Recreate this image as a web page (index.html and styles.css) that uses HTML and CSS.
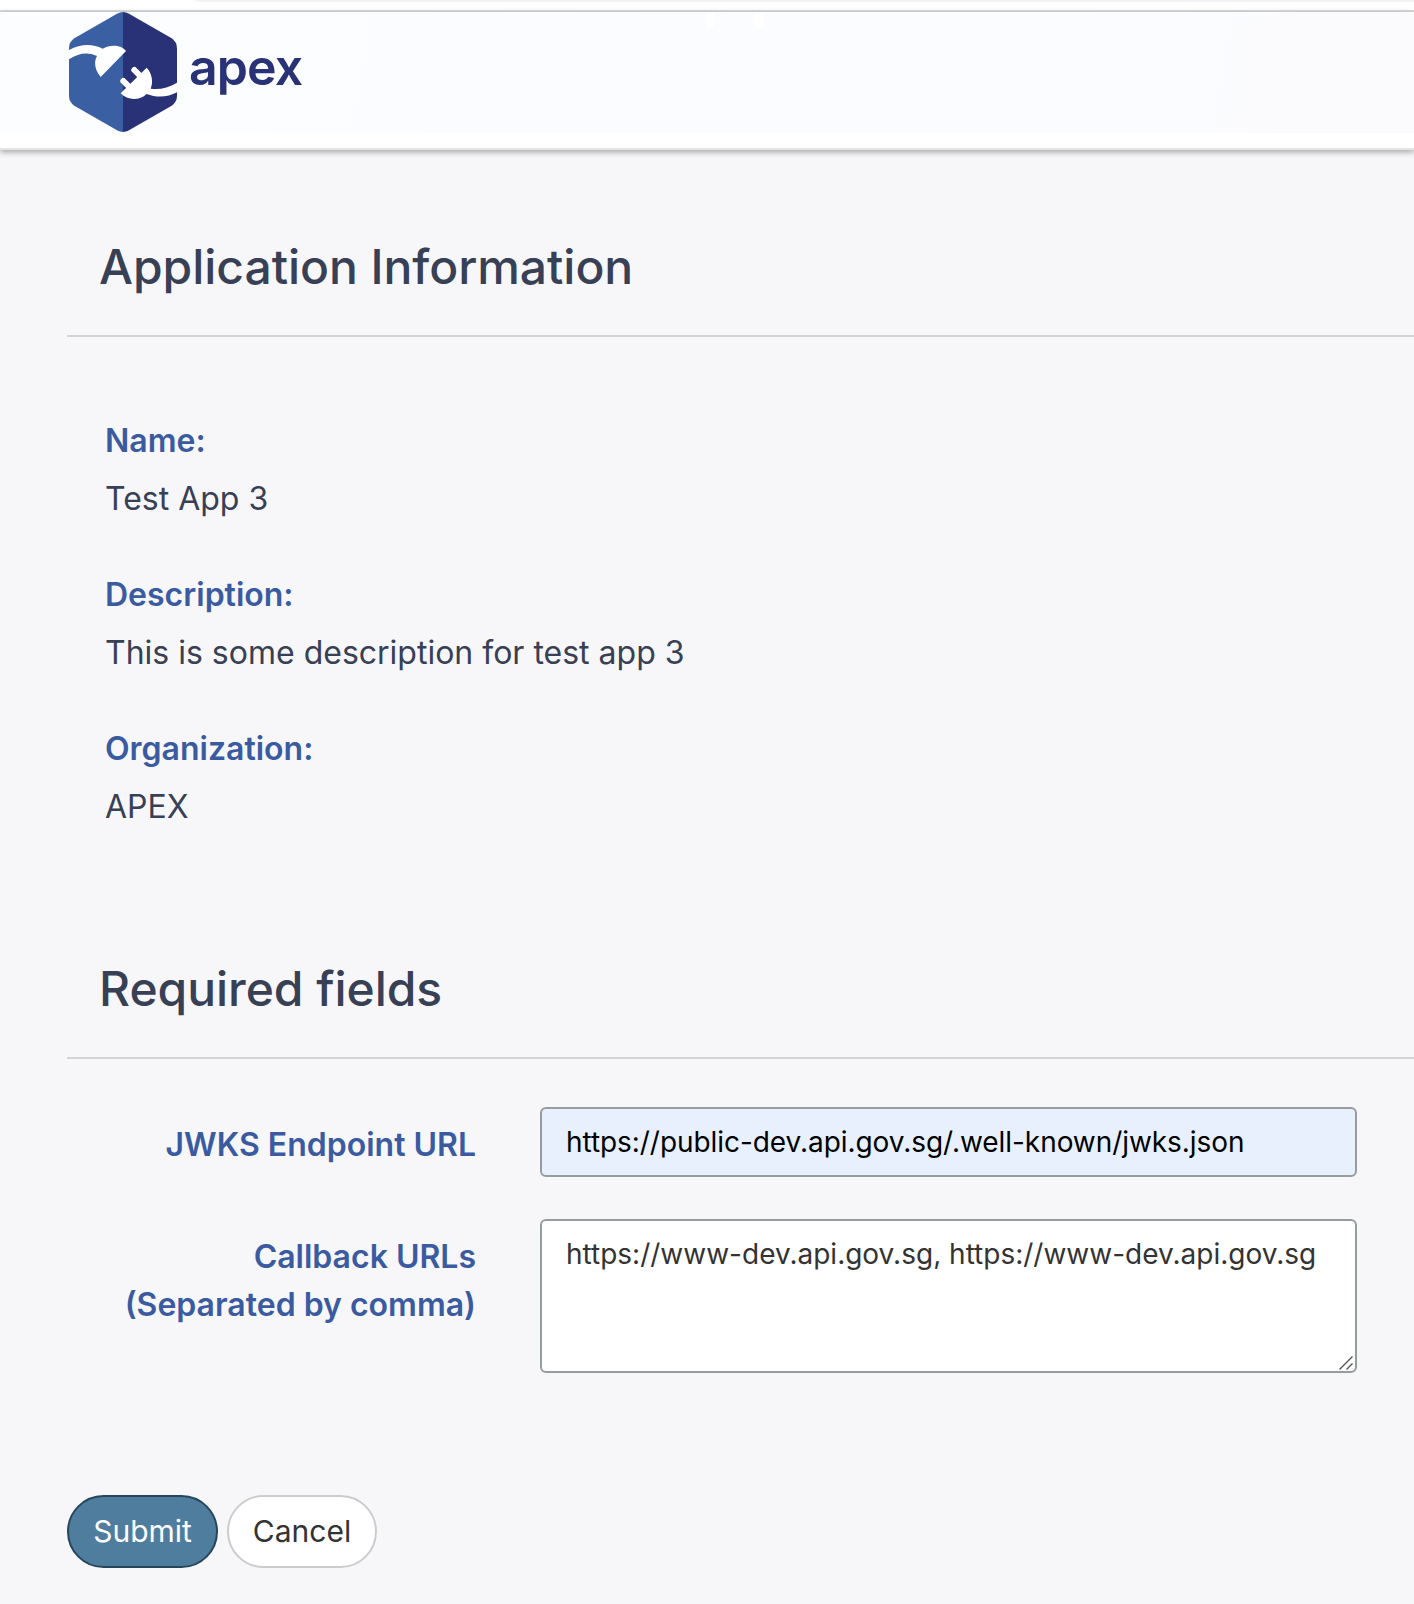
FILE: index.html
```html
<!DOCTYPE html>
<html lang="en">
<head>
<meta charset="utf-8">
<title>apex - Application Information</title>
<link rel="stylesheet" href="styles.css">
</head>
<body>
<div class="chrome-strip"><div class="chrome-field"></div></div>
<header class="site-header">
  <div class="header-band">
    <a class="brand">
      <svg class="brand-mark" viewBox="27 21 324 360" aria-hidden="true">
        <defs>
          <clipPath id="hex"><path d="M171 26Q189 16 207 26L335 100Q351 111 351 130V272Q351 291 335 302L207 376Q189 386 171 376L43 302Q27 291 27 272V130Q27 111 43 100Z"/></clipPath>
        </defs>
        <g clip-path="url(#hex)">
          <rect x="27" y="21" width="162" height="360" fill="#3b5fa3"/>
          <rect x="189" y="21" width="162" height="360" fill="#2a3277"/>
          <path fill="#fff" d="M25 136C60 117 96 115 128 131C150 118 184 119 198 138L122 216C104 195 101 170 111 153C82 140 56 144 25 164Z"/>
          <path fill="#fff" d="M260 188C277 205 280 232 272 251C300 255 326 248 353 232V261C325 277 291 279 260 267C240 286 204 289 182 265Z"/>
          <path fill="none" stroke="#fff" stroke-width="18" stroke-linecap="round" d="M223 195L245 217M190 228L212 250"/>
        </g>
      </svg>
      <span class="brand-name">apex</span>
    </a>
    <span class="notch notch-left"></span><span class="notch notch-right"></span>
  </div>
</header>
<main class="content">
  <section>
    <h1 class="section-title">Application Information</h1>
    <dl class="details">
      <dt>Name:</dt><dd>Test App 3</dd>
      <dt>Description:</dt><dd>This is some description for test app 3</dd>
      <dt>Organization:</dt><dd>APEX</dd>
    </dl>
  </section>
  <form class="form">
    <h2 class="section-title">Required fields</h2>
    <div class="field jwks">
      <label for="jwks">JWKS Endpoint URL</label>
      <input id="jwks" type="text" value="https://public-dev.api.gov.sg/.well-known/jwks.json">
    </div>
    <div class="field callback">
      <label for="callback">Callback URLs<br>(Separated by comma)</label>
      <div class="textarea-wrap">
        <textarea id="callback" spellcheck="false">https://www-dev.api.gov.sg, https://www-dev.api.gov.sg</textarea>
        <svg class="grip" viewBox="0 0 14 14" aria-hidden="true"><path d="M.5 13.5L13.5.5M7.5 13.5L13.5 7.5"/></svg>
      </div>
    </div>
    <div class="actions">
      <button type="button" class="btn btn-primary">Submit</button>
      <button type="button" class="btn">Cancel</button>
    </div>
  </form>
</main>
</body>
</html>
```
FILE: styles.css
```css
* { box-sizing: border-box; }
body {
  margin: 0;
  height: 1604px;
  overflow: hidden;
  background: #f7f7fa;
  color: #384055;
  font-family: Inter, "Liberation Sans", sans-serif;
}
.chrome-strip {
  height: 12px;
  padding-left: 194px;
  background: #fff;
  border-bottom: 2px solid #dadbdc;
}
.chrome-field {
  height: 2px;
  background: #f2f2f2;
  border-bottom-left-radius: 12px 2px;
}
.site-header {
  height: 138px;
  background: #fff;
  border-bottom: 2px solid #e5e5e5;
  box-shadow: 0 2px 6px rgba(0, 0, 0, .35);
}
.header-band {
  position: relative;
  height: 121px;
  padding-left: 69px;
  background: linear-gradient(100deg, #fbfdff, #fbfcff 85%, #fbfbfd 90%);
}
.brand { display: flex; }
.brand-mark { width: 108px; height: 120px; }
.brand-name {
  margin-left: 12px;
  padding-top: 25px;
  color: #2a3277;
  font-size: 50px;
  font-weight: 600;
  line-height: 60px;
  letter-spacing: -.9px;
}
.notch { position: absolute; top: 0; height: 15px; background: #fff; }
.notch-left { left: 706px; width: 8px; }
.notch-right { left: 754px; width: 9px; }
.content { padding: 81px 0 0 67px; }
.section-title {
  height: 106px;
  margin: 0;
  padding: 7px 0 0 32px;
  border-bottom: 2px solid #d2d3d6;
  font-size: 48px;
  font-weight: 500;
  line-height: 58px;
  letter-spacing: -.05px;
}
.details {
  margin: 80px 0 0;
  padding-left: 38px;
  font-size: 32px;
  line-height: 48px;
}
.details dt { color: #3b5ba1; font-weight: 600; }
.details dd { margin: 10px 0 48px; }
.form { margin-top: 122px; }
.field {
  display: grid;
  grid-template-columns: 409px 817px;
  column-gap: 64px;
}
.field label {
  padding-top: 14px;
  color: #3b5ba1;
  font-size: 32px;
  font-weight: 600;
  line-height: 48px;
  text-align: right;
  white-space: nowrap;
}
.jwks { margin-top: 48px; }
.callback { margin-top: 42px; }
input, textarea {
  display: block;
  width: 817px;
  margin: 0;
  padding: 14px 24px;
  border: 2px solid #959d9d;
  border-radius: 6px;
  background: #fff;
  color: #333;
  font: 400 28px/38px Inter, "Liberation Sans", sans-serif;
  outline: 0;
}
input { height: 70px; background: #e8f0fe; color: #000; letter-spacing: -.06px; }
textarea { height: 154px; resize: none; overflow: hidden; }
.textarea-wrap { position: relative; }
.grip {
  position: absolute;
  right: 4px;
  bottom: 3px;
  width: 14px;
  height: 14px;
  fill: none;
  stroke: #555;
  stroke-width: 1.4;
}
.actions { display: flex; gap: 9px; margin-top: 122px; }
.btn {
  width: 150px;
  height: 73px;
  padding: 0 0 2px;
  border: 2px solid #ccc;
  border-radius: 37px;
  background: #fff;
  color: #333;
  font: 400 30px/36px Inter, "Liberation Sans", sans-serif;
}
.btn-primary { width: 151px; border-color: #28465b; background: #4f7d9e; color: #fff; }
```
